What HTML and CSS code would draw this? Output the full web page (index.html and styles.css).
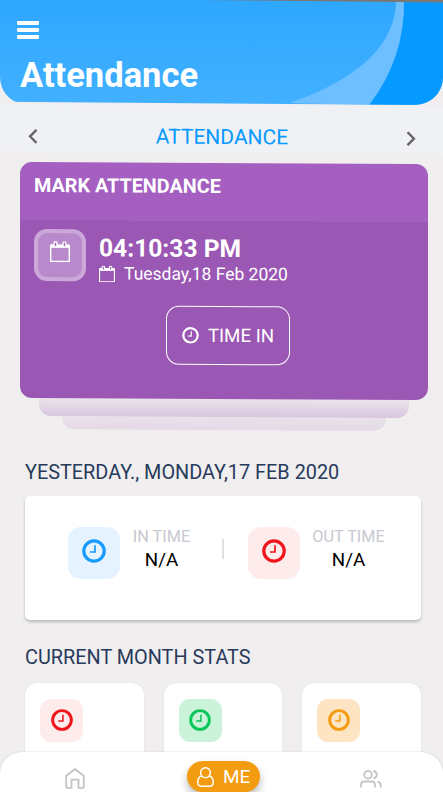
FILE: index.html
```html
<!DOCTYPE html>
<html lang="en">
<head>
  <meta charset="UTF-8">
  <meta name="viewport" content="width=device-width, initial-scale=1">
  <title>Attendance</title>
  <link rel="stylesheet" href="styles.css">
</head>
<body>

  <!-- shared icons -->
  <svg class="sprite">
    <symbol id="clock" viewBox="0 0 24 24">
      <circle cx="12" cy="12" r="10.2" fill="none" stroke="currentColor" stroke-width="3.2"/>
      <path d="M13 6.2V13H8" fill="none" stroke="currentColor" stroke-width="1.7"/>
    </symbol>
    <symbol id="calendar" viewBox="0 0 20 21">
      <path d="M.7 5.5h18.6v14.8H.7z" fill="none" stroke="currentColor" stroke-width="1.4"/>
      <path d="M.2 3.2h19.6v3.4H.2z" fill="currentColor"/>
      <rect x="4" y=".7" width="3" height="5" rx="1.4" fill="#a76bbd" stroke="currentColor" stroke-width="1.4"/>
      <rect x="13" y=".7" width="3" height="5" rx="1.4" fill="#a76bbd" stroke="currentColor" stroke-width="1.4"/>
    </symbol>
  </svg>

  <header class="header">
    <svg class="header-art" viewBox="0 0 443 108" preserveAspectRatio="none">
      <path d="M404 0Q405 60 369 108H443V0z" fill="#0699ff"/>
      <path d="M396 0Q396 67 290 106L369 108Q405 60 404 0z" fill="#6dbfff"/>
      <path d="M200 0H443V2.6z" fill="#7b7775"/>
    </svg>
    <button class="menu" aria-label="Menu"><span></span><span></span><span></span></button>
    <h1>Attendance</h1>
  </header>

  <nav class="tabs">
    <svg width="10" height="15" viewBox="0 0 10 15"><path d="M8.5 1L2 7.5L8.5 14"/></svg>
    <span>ATTENDANCE</span>
    <svg width="10" height="15" viewBox="0 0 10 15"><path d="M1.5 1L8 7.5L1.5 14"/></svg>
  </nav>

  <main>
    <section class="mark">
      <div class="mark-card">
        <h2>MARK ATTENDANCE</h2>
        <div class="now">
          <div class="now-icon"><svg width="20" height="21"><use href="#calendar"/></svg></div>
          <div>
            <div class="time">04:10:33 PM</div>
            <div class="date"><svg width="16" height="17"><use href="#calendar"/></svg><span>Tuesday,18 Feb 2020</span></div>
          </div>
        </div>
        <button class="time-in"><svg width="17" height="17"><use href="#clock"/></svg><span>TIME IN</span></button>
      </div>
      <div class="layer first"></div>
      <div class="layer second"></div>
    </section>

    <h3 class="yesterday-title">YESTERDAY., MONDAY,17 FEB 2020</h3>
    <section class="yesterday">
      <div class="tile blue"><svg width="24" height="24"><use href="#clock"/></svg></div>
      <div class="entry in"><span>IN TIME</span><b>N/A</b></div>
      <i class="divider"></i>
      <div class="tile red"><svg width="24" height="24"><use href="#clock"/></svg></div>
      <div class="entry out"><span>OUT TIME</span><b>N/A</b></div>
    </section>

    <h3 class="stats-title">CURRENT MONTH STATS</h3>
    <section class="stats">
      <div class="stat"><div class="tile red"><svg width="22" height="22"><use href="#clock"/></svg></div></div>
      <div class="stat"><div class="tile green"><svg width="22" height="22"><use href="#clock"/></svg></div></div>
      <div class="stat"><div class="tile orange"><svg width="22" height="22"><use href="#clock"/></svg></div></div>
    </section>
  </main>

  <footer class="bottom-nav">
    <svg class="home" width="20" height="21" viewBox="0 0 20 21"><path d="M1.2 7.7L10 1.2l8.800 6.500v11.100q0 1-1 1h-4.300v-8.200h-7v8.200H2.200q-1 0-1-1z"/></svg>
    <div class="me-wrap">
      <a class="me">
        <svg width="17" height="20" viewBox="0 0 17 20"><circle cx="8.5" cy="5.700" r="4.900"/><path d="M4.800 9C2 9.500.8 12 .8 15.500c0 2.500 1.200 3.700 3.200 3.700h9c2 0 3.200-1.200 3.200-3.700C16.200 12 15 9.500 12.200 9"/></svg>
        <span>ME</span>
      </a>
    </div>
    <svg class="people" width="22" height="18" viewBox="0 0 22 18"><circle cx="8" cy="4.700" r="3.800"/><path d="M1 17.500V15q0-3.500 3.500-3.500h7q3.500 0 3.500 3.500v2.500M13.500 1q3.300.7 3.300 3.700t-3.300 3.700M17.500 11.700q3.300.8 3.300 3.800v2"/></svg>
  </footer>

</body>
</html>
```
FILE: styles.css
```css
* {
  box-sizing: border-box;
}

body {
  margin: 0;
  height: 800px;
  background: #f0eeef;
  font-family: Roboto, "Liberation Sans", sans-serif;
  overflow: hidden;
  position: relative;
}

h1, h2, h3 {
  margin: 0;
}

svg {
  display: block;
  flex: none;
}

button {
  font-family: inherit;
  color: #fff;
  background: none;
  border: none;
  padding: 0;
}

.sprite {
  position: absolute;
  width: 0;
  height: 0;
}

/* header */
.header {
  position: relative;
  height: 105px;
  padding: 21px 17px 0;
  background: linear-gradient(#2ea7ff, #42b0ff);
  border-radius: 0 0 28px 28px;
  overflow: hidden;
  color: #fff;
  clip-path: polygon(0 0, 100% 0, 100% 100%, 0 97%);
}

.header-art {
  position: absolute;
  top: 0;
  left: 0;
  width: 100%;
  height: 100%;
}

.menu {
  position: relative;
  display: flex;
  flex-direction: column;
  gap: 3px;
  width: 22px;
}

.menu span {
  height: 4px;
  border-radius: 1px;
  background: #fff;
}

.header h1 {
  position: relative;
  margin: 15px 0 0 3px;
  font-size: 34.500px;
  line-height: 42px;
}

/* tabs */
.tabs {
  display: flex;
  align-items: center;
  justify-content: space-between;
  height: 48px;
  padding: 16px 27px 0 28px;
  background: #eff1f5;
  color: #0699ff;
  font-size: 21px;
  transform: skewY(.35deg);
}

.header + .tabs {
  position: relative;
  z-index: -1;
}

.tabs svg {
  fill: none;
  stroke: #666;
  stroke-width: 2.300;
}

/* mark attendance card */
.mark {
  height: 269px;
  margin: 10px 15px 0 20px;
  transform: skewY(.3deg);
}

.mark-card {
  position: relative;
  z-index: 2;
  height: 236px;
  padding: 12px 14px;
  border-radius: 12px;
  background: linear-gradient(#a45fc1 58px, #9a57b3 58px);
  color: #fff;
}

.mark-card h2 {
  font-size: 19.800px;
  line-height: 24px;
}

.now {
  display: flex;
  gap: 13px;
  margin-top: 31px;
}

.now-icon {
  display: flex;
  justify-content: center;
  width: 52px;
  height: 52px;
  padding-top: 8px;
  border: 4px solid #cba8d9;
  border-radius: 13px;
  background: #b98acb;
}

.time {
  margin-top: 5px;
  font-size: 24.600px;
  line-height: 27px;
  font-weight: bold;
}

.date {
  display: flex;
  align-items: center;
  gap: 9px;
  font-size: 17.500px;
  line-height: 24px;
}

.time-in {
  display: flex;
  align-items: center;
  justify-content: center;
  gap: 9px;
  width: 124px;
  height: 59px;
  margin: 20px 0 0 132px;
  border: 1.500px solid #fff;
  border-radius: 13px;
  font-size: 18.700px;
}

.layer {
  position: relative;
  z-index: 1;
  height: 18px;
  margin: 0 19px;
  border-radius: 0 0 12px 12px;
  background: linear-gradient(#ebe4eb, #d9c5df);
}

.layer.second {
  z-index: 0;
  height: 13px;
  margin: 0 42px;
  background: linear-gradient(#e9e2ea, #e4d9e6);
}

/* yesterday */
h3 {
  margin-left: 25px;
  color: #283a5b;
  font-size: 19.850px;
  font-weight: 400;
  line-height: 26px;
}

.yesterday-title {
  margin-top: 28px;
}

.yesterday {
  display: flex;
  height: 124px;
  margin: 10px 22px 0 25px;
  padding: 31px 0 0 43px;
  border-radius: 5px;
  background: #fff;
  box-shadow: 0 2px 3px #bbb;
}

.tile {
  display: flex;
  align-items: center;
  justify-content: center;
  flex: none;
  width: 52px;
  height: 52px;
  border-radius: 13px;
}

.tile svg {
  margin-top: -4px;
}

.blue { color: #189bff; background: #e4f3ff; }
.red { color: #f0151a; background: #feecec; }
.green { color: #08c65b; background: #caf3da; }
.orange { color: #f39c12; background: #fde5c4; }

.entry {
  display: flex;
  flex-direction: column;
  align-items: center;
  margin-left: 13px;
  font-size: 16.300px;
  line-height: 19px;
  color: #c7c9d0;
  white-space: nowrap;
}

.entry.in {
  width: 57px;
}

.entry.out {
  width: 71px;
}

.entry b {
  margin-top: 2px;
  color: #000;
  font-size: 18.800px;
  font-weight: 400;
  line-height: 24px;
}

.divider {
  width: 2px;
  height: 20px;
  margin: 12px 24px 0 32px;
  background: #dfe0e4;
}

/* monthly stats */
.stats-title {
  margin-top: 25px;
}

.stats {
  display: flex;
  gap: 20px;
  margin: 12px 22px 0 25px;
}

.stat {
  width: 119px;
  height: 100px;
  padding: 16px 15px;
  border-radius: 12px;
  background: #fff;
  box-shadow: 0 0 1px #ccc;
}

.stat .tile {
  width: 43px;
  height: 43px;
  border-radius: 11px;
}

.stat .tile svg {
  margin-top: -2px;
}

/* bottom navigation */
.bottom-nav {
  position: absolute;
  z-index: 3;
  left: 0;
  right: 0;
  bottom: 0;
  display: flex;
  justify-content: space-between;
  height: 48px;
  padding: 0 61px 0 65px;
  border-radius: 22px 22px 0 0;
  background: #fff;
  box-shadow: 0 0 2px #ccc;
}

.bottom-nav svg {
  fill: none;
  stroke: #c3c4c8;
  stroke-width: 1.800;
}

.home {
  margin-top: 16px;
}

.people {
  margin-top: 18px;
}

.me-wrap {
  height: 40px;
  padding: 9px 11px 0 13px;
  overflow: hidden;
}

.me {
  display: flex;
  align-items: center;
  gap: 9px;
  width: 73px;
  height: 31px;
  padding-left: 10px;
  border-radius: 16px;
  background: #f39c12;
  color: #fff;
  font-size: 19px;
  box-shadow: 0 5px 8px #bbb;
}

.bottom-nav .me svg {
  stroke: #fff;
  stroke-width: 1.400;
}
```
